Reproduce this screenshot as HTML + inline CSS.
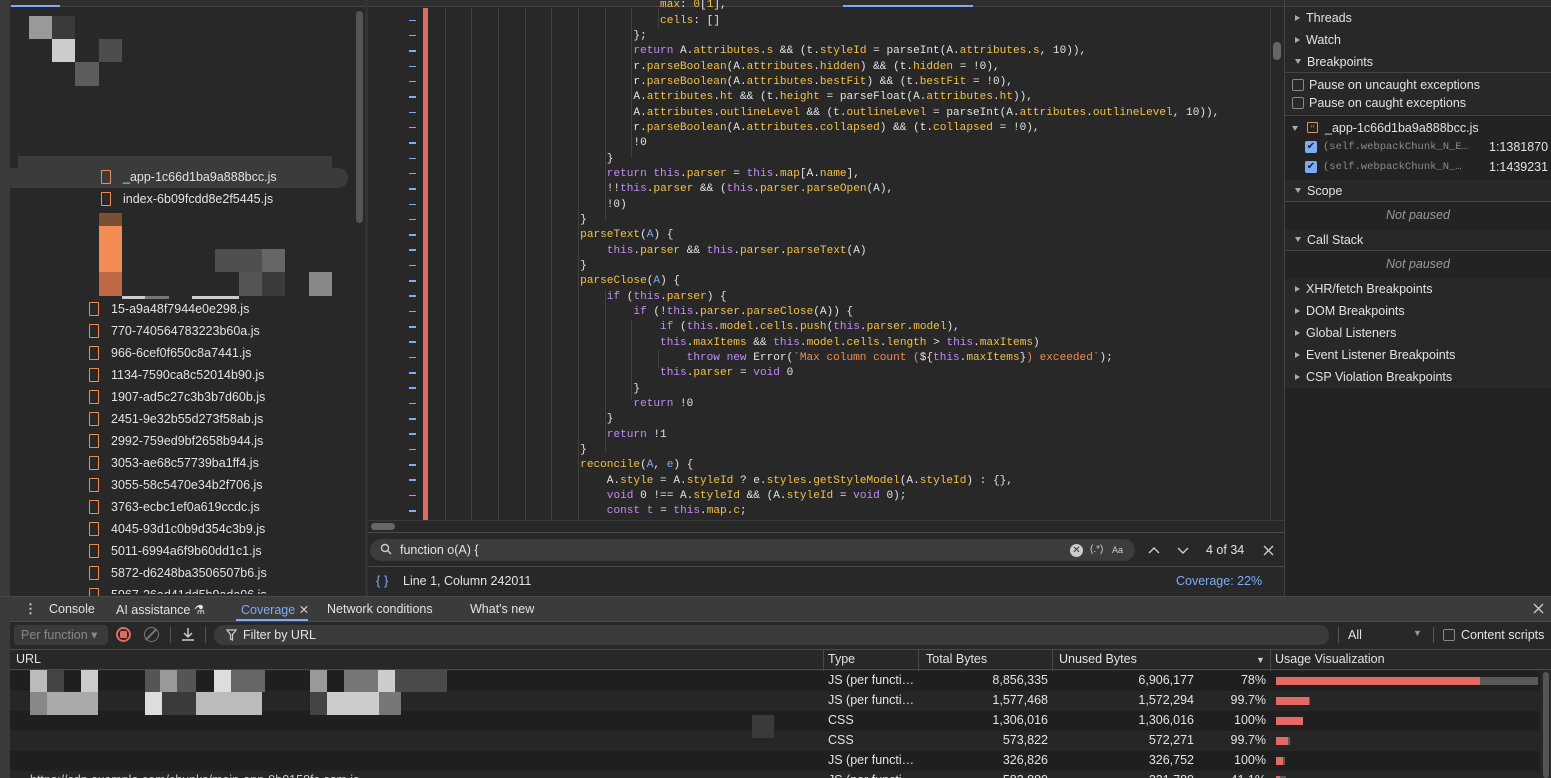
<!DOCTYPE html>
<html style="overflow:hidden;height:778px"><head><meta charset="utf-8"><style>
*{margin:0;padding:0;box-sizing:border-box}
html,body{overflow:hidden}
body{width:1551px;height:778px;overflow:hidden;background:#282828;font-family:"Liberation Sans",sans-serif;font-size:12px;color:#e3e3e3;position:relative}
.a{position:absolute}
.code{position:absolute;left:447px;top:-1.6px;font-family:"Liberation Mono",monospace;font-size:11.1px;line-height:15.33px;white-space:pre;color:#e3e3e3}
.k{color:#c58af9}.p{color:#f5c046}.b{color:#7cacf8}.s{color:#f28b54}
.dash{position:absolute;left:409px;width:7px;height:1.5px;background:#7cacf8}
.guide{position:absolute;top:8px;width:1px;background:#3f3f3f}
.f{position:absolute;height:22px;line-height:22px;font-size:12.5px;color:#e3e3e3}
.ic{position:absolute;width:10px;height:14px;border:1.5px solid #f28b54;border-radius:1px;top:4px}
.rp{position:absolute;left:1285px;width:266px;height:22px;line-height:22px;font-size:12.5px}
.tri{display:inline-block;width:0;height:0;margin:0 6px 1px 10px}
.tr{border-left:5px solid #aaa;border-top:3.5px solid transparent;border-bottom:3.5px solid transparent}
.td{border-top:5px solid #aaa;border-left:3.5px solid transparent;border-right:3.5px solid transparent;margin-bottom:2px}
.row{position:absolute;left:10px;width:1530px;height:20px;font-size:12.5px;line-height:20px}
.px{position:absolute}
</style></head><body>
<div class="a" style="left:0;top:0;width:1551px;height:7px;background:#2e2e2e;border-bottom:1px solid #444"></div>
<div class="a" style="left:11px;top:5px;width:49px;height:2px;background:#7cacf8"></div>
<div class="a" style="left:843px;top:5px;width:130px;height:2px;background:#7cacf8"></div>
<div class="a" style="left:0;top:0;width:10px;height:597px;background:#3a3a3a"></div>
<div class="a" style="left:10px;top:8px;width:355px;height:589px;background:#282828"></div>
<div class="a" style="left:365px;top:0;width:3px;height:597px;background:#333"></div>
<div class="a" style="left:356px;top:11px;width:7px;height:212px;background:#555;border-radius:4px"></div>
<div class="px" style="left:29px;top:16px;width:23px;height:23px;background:#999"></div>
<div class="px" style="left:52px;top:16px;width:23px;height:23px;background:#3a3a3a"></div>
<div class="px" style="left:52px;top:39px;width:23px;height:23px;background:#ccc"></div>
<div class="px" style="left:99px;top:39px;width:23px;height:23px;background:#4d4d4d"></div>
<div class="px" style="left:75px;top:62px;width:24px;height:24px;background:#5c5c5c"></div>
<div class="a" style="left:18px;top:156px;width:314px;height:13px;background:#3b3b3b"></div>
<div class="a" style="left:10px;top:168px;width:338px;height:20px;background:#3b3b3b;border-radius:0 10px 10px 0"></div>
<div class="ic" style="left:101px;top:170px"></div><div class="f" style="left:123px;top:166px">_app-1c66d1ba9a888bcc.js</div>
<div class="ic" style="left:101px;top:192px"></div><div class="f" style="left:123px;top:188px">index-6b09fcdd8e2f5445.js</div>
<div class="px" style="left:99px;top:213px;width:23px;height:13px;background:#7a5030"></div>
<div class="px" style="left:99px;top:226px;width:23px;height:46px;background:#f28b54"></div>
<div class="px" style="left:99px;top:272px;width:23px;height:24px;background:#c06a45"></div>
<div class="px" style="left:215px;top:249px;width:47px;height:23px;background:#4f4f4f"></div>
<div class="px" style="left:262px;top:249px;width:23px;height:23px;background:#666"></div>
<div class="px" style="left:239px;top:272px;width:23px;height:24px;background:#555"></div>
<div class="px" style="left:262px;top:272px;width:23px;height:24px;background:#3a3a3a"></div>
<div class="px" style="left:309px;top:272px;width:23px;height:24px;background:#888"></div>
<div class="px" style="left:122px;top:296px;width:23px;height:3px;background:#ccc"></div>
<div class="px" style="left:145px;top:296px;width:24px;height:3px;background:#777"></div>
<div class="px" style="left:192px;top:296px;width:47px;height:3px;background:#ccc"></div>
<div class="ic" style="left:89px;top:302px"></div><div class="f" style="left:111px;top:298px">15-a9a48f7944e0e298.js</div>
<div class="ic" style="left:89px;top:324px"></div><div class="f" style="left:111px;top:320px">770-740564783223b60a.js</div>
<div class="ic" style="left:89px;top:346px"></div><div class="f" style="left:111px;top:342px">966-6cef0f650c8a7441.js</div>
<div class="ic" style="left:89px;top:368px"></div><div class="f" style="left:111px;top:364px">1134-7590ca8c52014b90.js</div>
<div class="ic" style="left:89px;top:390px"></div><div class="f" style="left:111px;top:386px">1907-ad5c27c3b3b7d60b.js</div>
<div class="ic" style="left:89px;top:412px"></div><div class="f" style="left:111px;top:408px">2451-9e32b55d273f58ab.js</div>
<div class="ic" style="left:89px;top:434px"></div><div class="f" style="left:111px;top:430px">2992-759ed9bf2658b944.js</div>
<div class="ic" style="left:89px;top:456px"></div><div class="f" style="left:111px;top:452px">3053-ae68c57739ba1ff4.js</div>
<div class="ic" style="left:89px;top:478px"></div><div class="f" style="left:111px;top:474px">3055-58c5470e34b2f706.js</div>
<div class="ic" style="left:89px;top:500px"></div><div class="f" style="left:111px;top:496px">3763-ecbc1ef0a619ccdc.js</div>
<div class="ic" style="left:89px;top:522px"></div><div class="f" style="left:111px;top:518px">4045-93d1c0b9d354c3b9.js</div>
<div class="ic" style="left:89px;top:544px"></div><div class="f" style="left:111px;top:540px">5011-6994a6f9b60dd1c1.js</div>
<div class="ic" style="left:89px;top:566px"></div><div class="f" style="left:111px;top:562px">5872-d6248ba3506507b6.js</div>
<div class="ic" style="left:89px;top:588px"></div><div class="f" style="left:111px;top:584px;height:10px;overflow:hidden">5967-26ad41dd5b9ada06.js</div>

<div class="a" style="left:368px;top:8px;width:917px;height:512px;background:#282828"></div>
<div class="a" style="left:423px;top:8px;width:5px;height:512px;background:#e46962"></div>
<div class="guide" style="left:445px;height:512px"></div>
<div class="guide" style="left:471px;height:512px"></div>
<div class="guide" style="left:498px;height:512px"></div>
<div class="guide" style="left:525px;height:512px"></div>
<div class="guide" style="left:551px;height:512px"></div>
<div class="guide" style="left:578px;height:512px"></div>
<div class="guide" style="left:605px;top:8px;height:212px"></div>
<div class="guide" style="left:605px;top:290px;height:162px"></div>
<div class="guide" style="left:631px;top:8px;height:150px"></div>
<div class="guide" style="left:631px;top:320px;height:80px"></div>
<div class="guide" style="left:658px;top:8px;height:20px"></div>
<div class="guide" style="left:658px;top:350px;height:18px"></div>
<div id="dashes"></div>
<div style="position:absolute;left:0;top:0;width:1285px;height:520px;overflow:hidden">
<div class="code">                                <span class="p">max</span>: <span class="p">0</span>[<span class="p">1</span>],
                                <span class="p">cells</span>: []
                            };
                            <span class="k">return</span> A.<span class="p">attributes</span>.<span class="p">s</span> &amp;&amp; (t.<span class="p">styleId</span> = parseInt(A.<span class="p">attributes</span>.<span class="p">s</span>, 10)),
                            r.<span class="p">parseBoolean</span>(A.<span class="p">attributes</span>.<span class="p">hidden</span>) &amp;&amp; (t.<span class="p">hidden</span> = !0),
                            r.<span class="p">parseBoolean</span>(A.<span class="p">attributes</span>.<span class="p">bestFit</span>) &amp;&amp; (t.<span class="p">bestFit</span> = !0),
                            A.<span class="p">attributes</span>.<span class="p">ht</span> &amp;&amp; (t.<span class="p">height</span> = parseFloat(A.<span class="p">attributes</span>.<span class="p">ht</span>)),
                            A.<span class="p">attributes</span>.<span class="p">outlineLevel</span> &amp;&amp; (t.<span class="p">outlineLevel</span> = parseInt(A.<span class="p">attributes</span>.<span class="p">outlineLevel</span>, 10)),
                            r.<span class="p">parseBoolean</span>(A.<span class="p">attributes</span>.<span class="p">collapsed</span>) &amp;&amp; (t.<span class="p">collapsed</span> = !0),
                            !0
                        }
                        <span class="k">return this</span>.<span class="p">parser</span> = <span class="k">this</span>.<span class="p">map</span>[A.<span class="p">name</span>],
                        !!<span class="k">this</span>.<span class="p">parser</span> &amp;&amp; (<span class="k">this</span>.<span class="p">parser</span>.<span class="p">parseOpen</span>(A),
                        !0)
                    }
                    <span class="p">parseText</span>(<span class="b">A</span>) {
                        <span class="k">this</span>.<span class="p">parser</span> &amp;&amp; <span class="k">this</span>.<span class="p">parser</span>.<span class="p">parseText</span>(A)
                    }
                    <span class="p">parseClose</span>(<span class="b">A</span>) {
                        <span class="k">if</span> (<span class="k">this</span>.<span class="p">parser</span>) {
                            <span class="k">if</span> (!<span class="k">this</span>.<span class="p">parser</span>.<span class="p">parseClose</span>(A)) {
                                <span class="k">if</span> (<span class="k">this</span>.<span class="p">model</span>.<span class="p">cells</span>.<span class="p">push</span>(<span class="k">this</span>.<span class="p">parser</span>.<span class="p">model</span>),
                                <span class="k">this</span>.<span class="p">maxItems</span> &amp;&amp; <span class="k">this</span>.<span class="p">model</span>.<span class="p">cells</span>.<span class="p">length</span> &gt; <span class="k">this</span>.<span class="p">maxItems</span>)
                                    <span class="k">throw new</span> Error(<span class="s">`Max column count (</span>${<span class="k">this</span>.<span class="p">maxItems</span>}<span class="s">) exceeded`</span>);
                                <span class="k">this</span>.<span class="p">parser</span> = <span class="k">void</span> 0
                            }
                            <span class="k">return</span> !0
                        }
                        <span class="k">return</span> !1
                    }
                    <span class="p">reconcile</span>(<span class="b">A</span>, <span class="b">e</span>) {
                        A.<span class="p">style</span> = A.<span class="p">styleId</span> ? e.<span class="p">styles</span>.<span class="p">getStyleModel</span>(A.<span class="p">styleId</span>) : {},
                        <span class="k">void</span> 0 !== A.<span class="p">styleId</span> &amp;&amp; (A.<span class="p">styleId</span> = <span class="k">void</span> 0);
                        <span class="k">const</span> <span class="b">t</span> = <span class="k">this</span>.<span class="p">map</span>.<span class="p">c</span>;</div>
</div>
<div class="a" style="left:1270px;top:8px;width:15px;height:512px;background:#282828;border-left:1px solid #3a3a3a"></div>
<div class="a" style="left:1273px;top:42px;width:8px;height:18px;background:#666;border-radius:4px"></div>
<div class="a" style="left:368px;top:520px;width:917px;height:12px;background:#282828;border-top:1px solid #3a3a3a"></div>
<div class="a" style="left:371px;top:523px;width:24px;height:7px;background:#666;border-radius:4px"></div>
<div class="a" style="left:368px;top:532px;width:917px;height:1px;background:#4a4a4a"></div>
<div class="a" style="left:370px;top:539px;width:765px;height:22px;background:#3c3c3c;border-radius:11px"></div>
<svg class="a" style="left:380px;top:543px" width="12" height="12" viewBox="0 0 12 12"><circle cx="5" cy="5" r="3.5" fill="none" stroke="#ccc" stroke-width="1.4"/><path d="M7.5 7.5L11 11" stroke="#ccc" stroke-width="1.5"/></svg>
<div class="a" style="left:400px;top:543px;font-size:12.5px">function o(A) {</div>
<div class="a" style="left:1070px;top:544px;width:13px;height:13px;border-radius:50%;background:#ccc;color:#333;font-size:10px;line-height:13px;text-align:center">✕</div>
<div class="a" style="left:1090px;top:544px;font-size:10px;color:#ccc">(.*)</div>
<div class="a" style="left:1112px;top:545px;font-size:9px;color:#ccc">Aa</div>
<svg class="a" style="left:1148px;top:545px" width="12" height="10"><path d="M1 8L6 3L11 8" fill="none" stroke="#ccc" stroke-width="1.4"/></svg>
<svg class="a" style="left:1177px;top:545px" width="12" height="10"><path d="M1 3L6 8L11 3" fill="none" stroke="#ccc" stroke-width="1.4"/></svg>
<div class="a" style="left:1206px;top:543px;font-size:12.5px">4 of 34</div>
<svg class="a" style="left:1263px;top:545px" width="11" height="11"><path d="M1 1L10 10M10 1L1 10" stroke="#ccc" stroke-width="1.4"/></svg>
<div class="a" style="left:368px;top:566px;width:917px;height:1px;background:#4a4a4a"></div>
<div class="a" style="left:376px;top:573px;font-size:13px;color:#7cacf8">{ }</div>
<div class="a" style="left:403px;top:574px;font-size:12.5px">Line 1, Column 242011</div>
<div class="a" style="left:1176px;top:574px;font-size:12.5px;color:#7cacf8">Coverage: 22%</div>
<div class="a" style="left:1284px;top:0;width:1px;height:597px;background:#444"></div>
<div class="a" style="left:1285px;top:8px;width:266px;height:589px;background:#282828"></div>
<div class="rp" style="top:7px"><span class="tri tr"></span>Threads</div>
<div class="rp" style="top:29px"><span class="tri tr"></span>Watch</div>
<div class="rp" style="top:51px;border-bottom:1px solid #444;height:22px"><span class="tri td"></span>Breakpoints</div>
<div class="a" style="left:1292px;top:79px;width:12px;height:12px;border:1px solid #888;border-radius:2px"></div>
<div class="a" style="left:1309px;top:78px;font-size:12.5px">Pause on uncaught exceptions</div>
<div class="a" style="left:1292px;top:97px;width:12px;height:12px;border:1px solid #888;border-radius:2px"></div>
<div class="a" style="left:1309px;top:96px;font-size:12.5px">Pause on caught exceptions</div>
<div class="a" style="left:1285px;top:115px;width:266px;height:1px;background:#444"></div>
<div class="a" style="left:1285px;top:116px;width:266px;height:64px;background:#232323"></div>
<div class="a" style="left:1292px;top:126px;width:0;height:0;border-top:5px solid #aaa;border-left:3.5px solid transparent;border-right:3.5px solid transparent"></div>
<div class="a" style="left:1307px;top:122px;width:11px;height:11px;border:1.3px solid #f28b54;border-radius:1px;font-size:6px;color:#f28b54;text-align:center;line-height:8px">‹›</div>
<div class="a" style="left:1325px;top:121px;font-size:12.5px">_app-1c66d1ba9a888bcc.js</div>
<div class="a" style="left:1305px;top:141px;width:12px;height:12px;background:#7cacf8;border-radius:2px;color:#222;font-size:10px;line-height:12px;text-align:center">✔</div>
<div class="a" style="left:1323px;top:141px;font-family:'Liberation Mono',monospace;font-size:10.5px;color:#8a8a8a">(self.webpackChunk_N_E…</div>
<div class="a" style="left:1489px;top:140px;font-size:12.5px">1:1381870</div>
<div class="a" style="left:1305px;top:161px;width:12px;height:12px;background:#7cacf8;border-radius:2px;color:#222;font-size:10px;line-height:12px;text-align:center">✔</div>
<div class="a" style="left:1323px;top:161px;font-family:'Liberation Mono',monospace;font-size:10.5px;color:#8a8a8a">(self.webpackChunk_N_…</div>
<div class="a" style="left:1489px;top:160px;font-size:12.5px">1:1439231</div>
<div class="rp" style="top:180px;border-bottom:1px solid #444;height:22px"><span class="tri td"></span>Scope</div>
<div class="a" style="left:1285px;top:202px;width:266px;height:27px;background:#232323;text-align:center;line-height:27px;font-style:italic;color:#999;font-size:12.5px">Not paused</div>
<div class="rp" style="top:229px;border-bottom:1px solid #444;height:22px"><span class="tri td"></span>Call Stack</div>
<div class="a" style="left:1285px;top:251px;width:266px;height:27px;background:#232323;text-align:center;line-height:27px;font-style:italic;color:#999;font-size:12.5px">Not paused</div>
<div class="rp" style="top:278px"><span class="tri tr"></span>XHR/fetch Breakpoints</div>
<div class="rp" style="top:300px"><span class="tri tr"></span>DOM Breakpoints</div>
<div class="rp" style="top:322px"><span class="tri tr"></span>Global Listeners</div>
<div class="rp" style="top:344px"><span class="tri tr"></span>Event Listener Breakpoints</div>
<div class="rp" style="top:366px"><span class="tri tr"></span>CSP Violation Breakpoints</div>
<div class="a" style="left:1285px;top:388px;width:266px;height:209px;background:#232323"></div>
<div class="a" style="left:0;top:596px;width:1551px;height:1px;background:#4a4a4a"></div>
<div class="a" style="left:0;top:597px;width:10px;height:181px;background:#3a3a3a"></div>
<div class="a" style="left:10px;top:597px;width:1541px;height:25px;background:#3b3b3b;border-bottom:1px solid #4a4a4a"></div>
<div class="a" style="left:24px;top:601px;font-size:13px;color:#ccc;font-weight:bold">⋮</div>
<div class="a" style="left:49px;top:602px;font-size:12.5px">Console</div>
<div class="a" style="left:116px;top:602px;font-size:12.5px">AI assistance ⚗</div>
<div class="a" style="left:241px;top:602px;font-size:12.5px;color:#7cacf8">Coverage <span style="color:#ccc">✕</span></div>
<div class="a" style="left:173px;top:619px;width:64px;height:2px;background:#7cacf8;left:173px;width:64px;left:236px;width:72px"></div>
<div class="a" style="left:327px;top:602px;font-size:12.5px">Network conditions</div>
<div class="a" style="left:470px;top:602px;font-size:12.5px">What's new</div>
<svg class="a" style="left:1533px;top:603px" width="11" height="11"><path d="M1 1L10 10M10 1L1 10" stroke="#ccc" stroke-width="1.3"/></svg>
<div class="a" style="left:10px;top:623px;width:1541px;height:26px;background:#282828"></div>
<div class="a" style="left:14px;top:625px;width:94px;height:20px;background:#3a3a3a;border-radius:4px;font-size:12.5px;line-height:20px;padding-left:7px;color:#888">Per function ▾</div>
<div class="a" style="left:116px;top:627px;width:15px;height:15px;border:2px solid #e46962;border-radius:50%"></div>
<div class="a" style="left:120px;top:631px;width:7px;height:7px;background:#e46962;border-radius:1px"></div>
<div class="a" style="left:144px;top:627px;width:15px;height:15px;border:1.5px solid #777;border-radius:50%"></div>
<div class="a" style="left:150px;top:627px;width:1.5px;height:15px;background:#777;transform:rotate(45deg)"></div>
<div class="a" style="left:170px;top:627px;width:1px;height:16px;background:#555"></div>
<svg class="a" style="left:181px;top:627px" width="14" height="15"><path d="M7 1V10M3 6L7 10L11 6M1 13H13" fill="none" stroke="#ccc" stroke-width="1.5"/></svg>
<div class="a" style="left:205px;top:627px;width:1px;height:16px;background:#555"></div>
<div class="a" style="left:214px;top:625px;width:1115px;height:20px;background:#3b3b3b;border-radius:10px"></div>
<svg class="a" style="left:226px;top:629px" width="11" height="12"><path d="M1 1H10L6.5 5.5V11L4.5 10V5.5Z" fill="none" stroke="#ccc" stroke-width="1.2"/></svg>
<div class="a" style="left:243px;top:628px;font-size:12.5px">Filter by URL</div>
<div class="a" style="left:1338px;top:627px;width:1px;height:16px;background:#555"></div>
<div class="a" style="left:1348px;top:628px;font-size:12.5px">All</div>
<div class="a" style="left:1413px;top:628px;font-size:9px;color:#999">▼</div>
<div class="a" style="left:1433px;top:627px;width:1px;height:16px;background:#555"></div>
<div class="a" style="left:1443px;top:629px;width:12px;height:12px;border:1px solid #888;border-radius:2px"></div>
<div class="a" style="left:1461px;top:628px;font-size:12.5px">Content scripts</div>
<div class="a" style="left:10px;top:649px;width:1541px;height:21px;background:#282828;border-top:1px solid #4a4a4a;border-bottom:1px solid #4a4a4a"></div>
<div class="a" style="left:16px;top:652px;font-size:12.5px">URL</div>
<div class="a" style="left:823px;top:650px;width:1px;height:128px;background:#4a4a4a"></div>
<div class="a" style="left:828px;top:652px;font-size:12.5px">Type</div>
<div class="a" style="left:918px;top:650px;width:1px;height:128px;background:#4a4a4a"></div>
<div class="a" style="left:926px;top:652px;font-size:12.5px">Total Bytes</div>
<div class="a" style="left:1052px;top:650px;width:1px;height:128px;background:#4a4a4a"></div>
<div class="a" style="left:1059px;top:652px;font-size:12.5px">Unused Bytes</div>
<div class="a" style="left:1256px;top:655px;font-size:9px;color:#ccc">▼</div>
<div class="a" style="left:1270px;top:650px;width:1px;height:128px;background:#4a4a4a"></div>
<div class="a" style="left:1275px;top:652px;font-size:12.5px">Usage Visualization</div>
<div class="row" style="top:671px;background:#1f1f1f"></div>
<div class="row" style="top:691px;background:#262626"></div>
<div class="row" style="top:711px;background:#1f1f1f"></div>
<div class="row" style="top:731px;background:#262626"></div>
<div class="row" style="top:751px;background:#1f1f1f"></div>
<div class="row" style="top:771px;background:#262626"></div>
<div class="a" style="left:1540px;top:670px;width:11px;height:108px;background:#282828"></div>
<div class="a" style="left:1543px;top:672px;width:6px;height:106px;background:#555;border-radius:3px"></div>
<div class="px" style="left:30px;top:670px;width:17px;height:22px;background:#bbb"></div>
<div class="px" style="left:47px;top:670px;width:17px;height:22px;background:#444"></div>
<div class="px" style="left:81px;top:670px;width:17px;height:22px;background:#ccc"></div>
<div class="px" style="left:145px;top:670px;width:51px;height:22px;background:#555"></div>
<div class="px" style="left:160px;top:670px;width:17px;height:22px;background:#999"></div>
<div class="px" style="left:214px;top:670px;width:17px;height:22px;background:#ddd"></div>
<div class="px" style="left:231px;top:670px;width:34px;height:22px;background:#666"></div>
<div class="px" style="left:310px;top:670px;width:17px;height:22px;background:#999"></div>
<div class="px" style="left:344px;top:670px;width:34px;height:22px;background:#777"></div>
<div class="px" style="left:378px;top:670px;width:17px;height:22px;background:#ccc"></div>
<div class="px" style="left:395px;top:670px;width:52px;height:22px;background:#4a4a4a"></div>
<div class="px" style="left:30px;top:692px;width:17px;height:23px;background:#888"></div>
<div class="px" style="left:47px;top:692px;width:51px;height:23px;background:#aaa"></div>
<div class="px" style="left:145px;top:692px;width:17px;height:23px;background:#ddd"></div>
<div class="px" style="left:162px;top:692px;width:34px;height:23px;background:#3a3a3a"></div>
<div class="px" style="left:196px;top:692px;width:66px;height:23px;background:#bbb"></div>
<div class="px" style="left:310px;top:692px;width:17px;height:23px;background:#444"></div>
<div class="px" style="left:327px;top:692px;width:52px;height:23px;background:#ccc"></div>
<div class="px" style="left:379px;top:692px;width:22px;height:23px;background:#777"></div>
<div class="px" style="left:752px;top:715px;width:22px;height:23px;background:#3a3a3a"></div>
<div class="a" style="left:30px;top:773px;font-size:12.5px;color:#ccc">https://cdn.example.com/chunks/main-app-9b0158fc.esm.js</div>
<div class="a" style="left:828px;top:673px;font-size:12.5px">JS (per functi…</div>
<div class="a" style="left:828px;top:693px;font-size:12.5px">JS (per functi…</div>
<div class="a" style="left:828px;top:713px;font-size:12.5px">CSS</div>
<div class="a" style="left:828px;top:733px;font-size:12.5px">CSS</div>
<div class="a" style="left:828px;top:753px;font-size:12.5px">JS (per functi…</div>
<div class="a" style="left:828px;top:773px;font-size:12.5px">JS (per functi…</div>
<div class="a" style="left:919px;top:673px;width:129px;text-align:right;font-size:12.5px">8,856,335</div>
<div class="a" style="left:919px;top:693px;width:129px;text-align:right;font-size:12.5px">1,577,468</div>
<div class="a" style="left:919px;top:713px;width:129px;text-align:right;font-size:12.5px">1,306,016</div>
<div class="a" style="left:919px;top:733px;width:129px;text-align:right;font-size:12.5px">573,822</div>
<div class="a" style="left:919px;top:753px;width:129px;text-align:right;font-size:12.5px">326,826</div>
<div class="a" style="left:919px;top:773px;width:129px;text-align:right;font-size:12.5px">583,880</div>
<div class="a" style="left:1053px;top:673px;width:141px;text-align:right;font-size:12.5px">6,906,177</div>
<div class="a" style="left:1053px;top:693px;width:141px;text-align:right;font-size:12.5px">1,572,294</div>
<div class="a" style="left:1053px;top:713px;width:141px;text-align:right;font-size:12.5px">1,306,016</div>
<div class="a" style="left:1053px;top:733px;width:141px;text-align:right;font-size:12.5px">572,271</div>
<div class="a" style="left:1053px;top:753px;width:141px;text-align:right;font-size:12.5px">326,752</div>
<div class="a" style="left:1053px;top:773px;width:141px;text-align:right;font-size:12.5px">231,780</div>
<div class="a" style="left:1200px;top:673px;width:66px;text-align:right;font-size:12.5px">78%</div>
<div class="a" style="left:1200px;top:693px;width:66px;text-align:right;font-size:12.5px">99.7%</div>
<div class="a" style="left:1200px;top:713px;width:66px;text-align:right;font-size:12.5px">100%</div>
<div class="a" style="left:1200px;top:733px;width:66px;text-align:right;font-size:12.5px">99.7%</div>
<div class="a" style="left:1200px;top:753px;width:66px;text-align:right;font-size:12.5px">100%</div>
<div class="a" style="left:1200px;top:773px;width:66px;text-align:right;font-size:12.5px">41.1%</div>
<div class="a" style="left:1276px;top:677px;width:204px;height:8px;background:#e46962"></div>
<div class="a" style="left:1480px;top:677px;width:58px;height:8px;background:#5a5a5a"></div>
<div class="a" style="left:1276px;top:697px;width:33px;height:8px;background:#e46962"></div>
<div class="a" style="left:1309px;top:697px;width:1px;height:8px;background:#5a5a5a"></div>
<div class="a" style="left:1276px;top:717px;width:27px;height:8px;background:#e46962"></div>
<div class="a" style="left:1276px;top:737px;width:12px;height:8px;background:#e46962"></div>
<div class="a" style="left:1288px;top:737px;width:2px;height:8px;background:#5a5a5a"></div>
<div class="a" style="left:1276px;top:757px;width:7px;height:8px;background:#e46962"></div>
<div class="a" style="left:1283px;top:757px;width:2px;height:8px;background:#5a5a5a"></div>
<div class="a" style="left:1276px;top:776px;width:4px;height:2px;background:#e46962"></div>
<div class="a" style="left:1280px;top:776px;width:6px;height:2px;background:#5a5a5a"></div>
<script>
var d=document.getElementById('dashes'),h='';
for(var i=0;i<34;i++){h+='<div class="dash" style="top:'+(19.5+i*15.33).toFixed(1)+'px"></div>';}
d.innerHTML=h;
</script>
</body></html>
